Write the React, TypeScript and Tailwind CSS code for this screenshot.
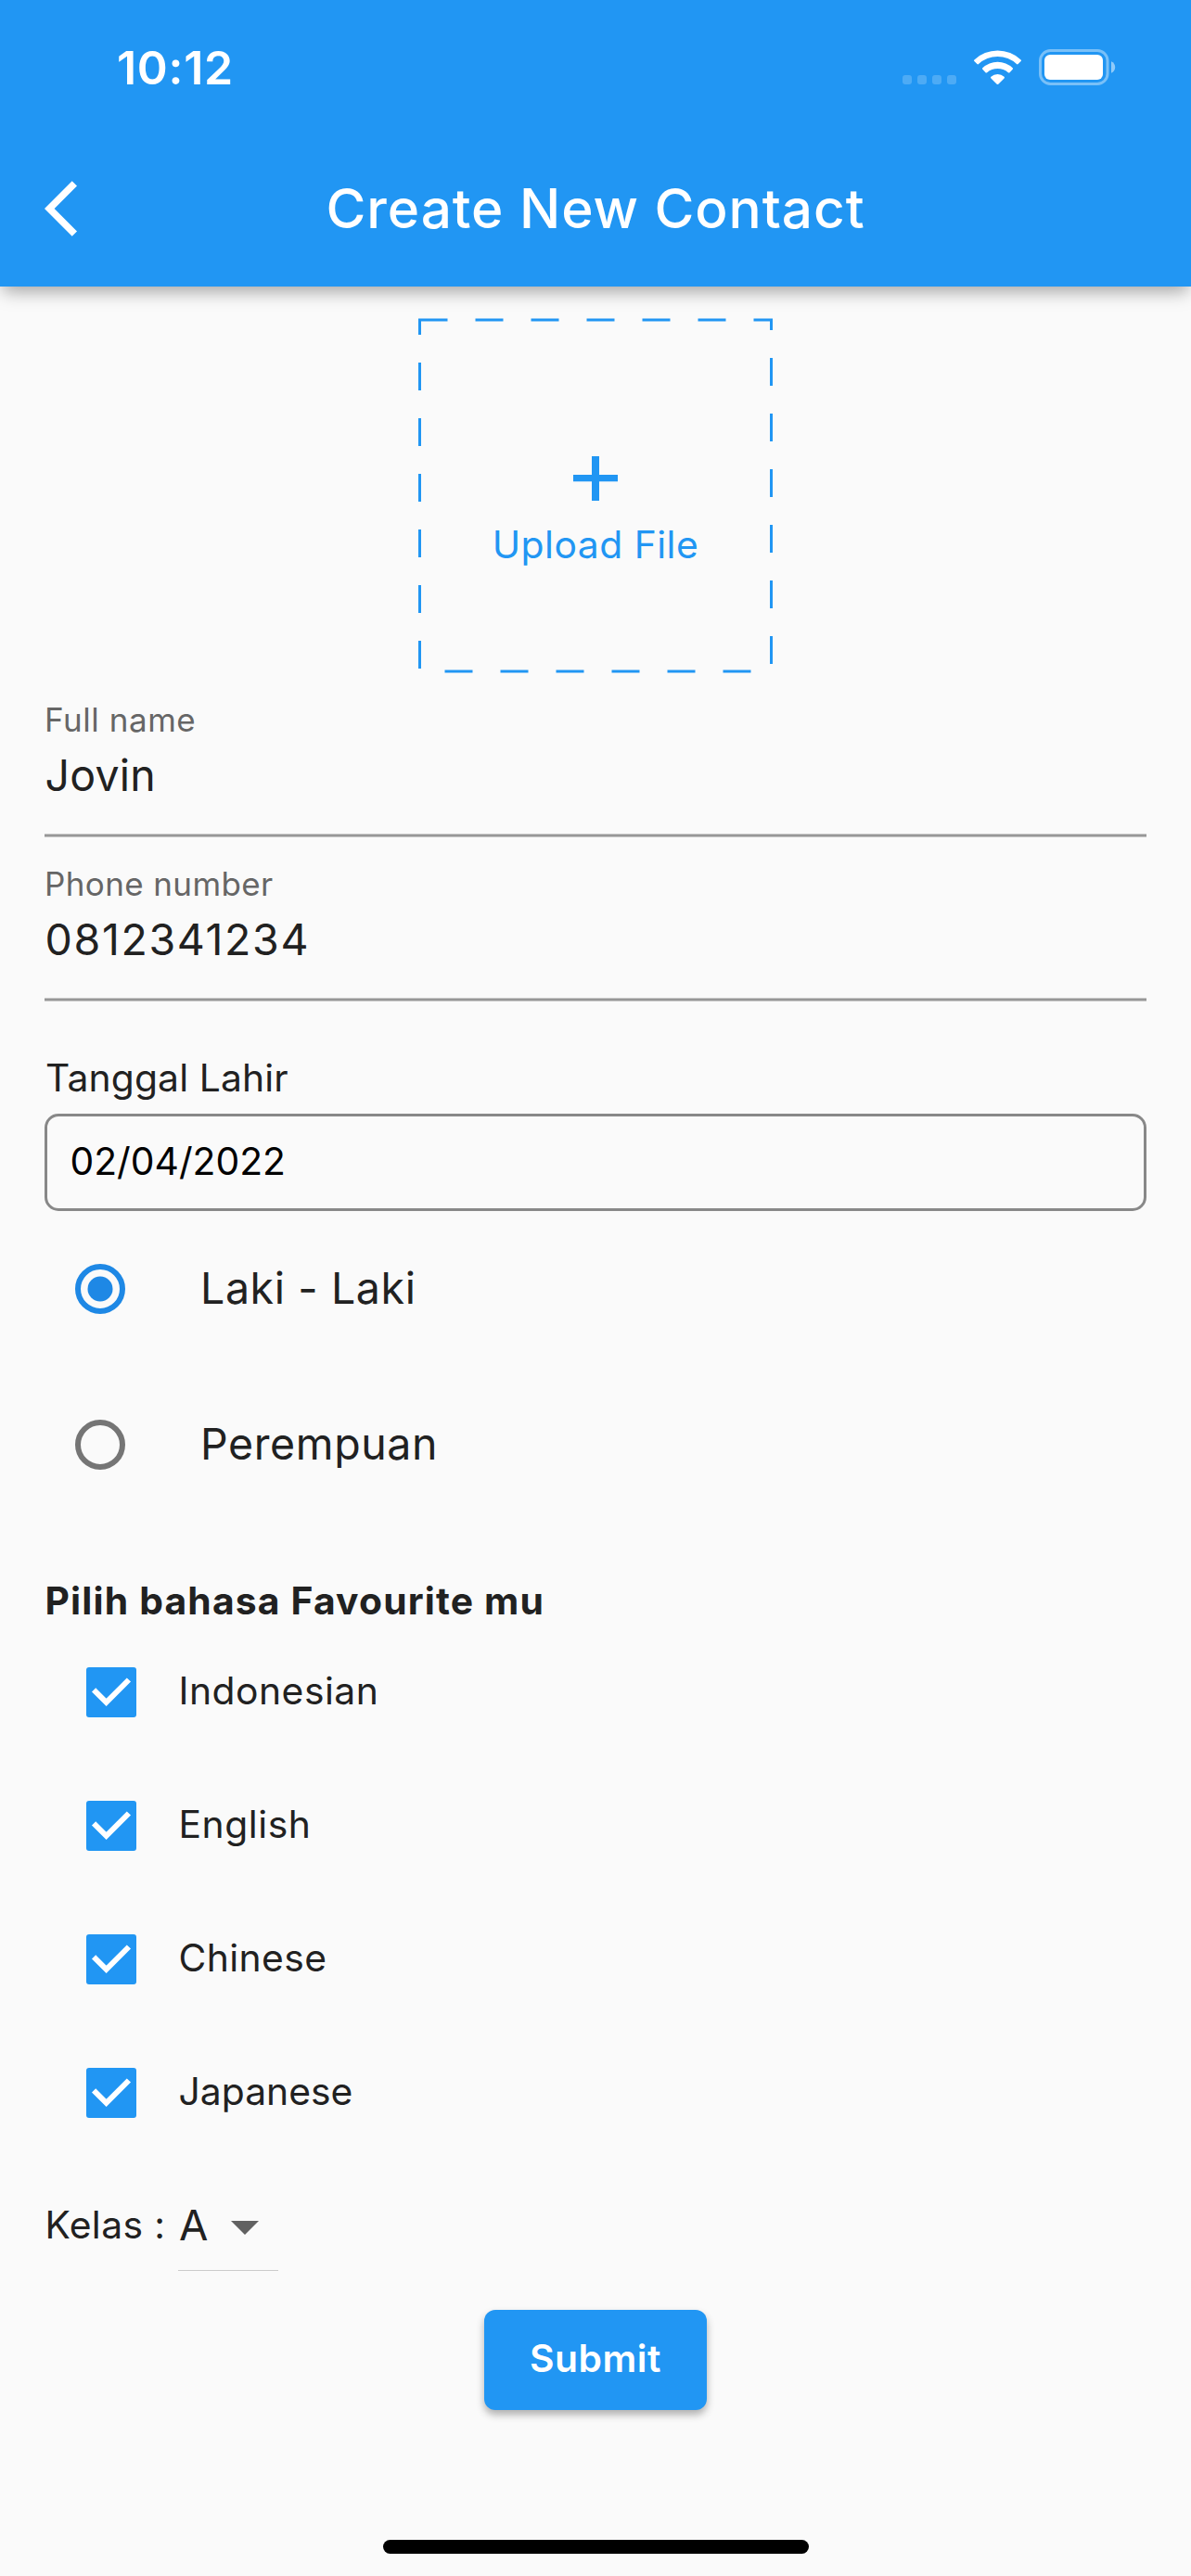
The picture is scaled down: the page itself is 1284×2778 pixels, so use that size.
import React from "react";

const radios = [
  { label: "Laki - Laki", selected: true },
  { label: "Perempuan", selected: false },
];

const languages = [
  { label: "Indonesian", tracking: "tracking-[0.5px]" },
  { label: "English", tracking: "tracking-[0.55px]" },
  { label: "Chinese", tracking: "tracking-[0.41px]" },
  { label: "Japanese", tracking: "tracking-[0.03px]" },
];

function WifiIcon() {
  return (
    <svg width="51" height="38" viewBox="0 0 51 38" fill="#fff">
      <path d="M0.4 10.4A36.5 36.5 0 0 1 50.6 10.4Q51.4 11.2 50.6 12L47.6 15.1Q46.8 15.8 46 15.1A30 30 0 0 0 5 15.1Q4.2 15.8 3.4 15.1L0.4 12Q-0.4 11.2 0.4 10.4Z" />
      <path d="M9.3 19.2A23.5 23.5 0 0 1 41.7 19.2Q42.5 20 41.7 20.8L38.5 24.2Q37.7 25 36.9 24.2A17.6 17.6 0 0 0 14.1 24.2Q13.3 25 12.5 24.2L9.3 20.8Q8.5 20 9.3 19.2Z" />
      <path d="M18.4 28.8A10.6 10.6 0 0 1 32.6 28.8Q33.4 29.6 32.6 30.4L26.3 36.7Q25.5 37.4 24.7 36.7L18.4 30.4Q17.6 29.6 18.4 28.8Z" />
    </svg>
  );
}

function BatteryIcon() {
  return (
    <svg width="83" height="39" viewBox="0 0 83 39">
      <rect x="1.5" y="1.5" width="72.5" height="36" rx="11" fill="none" stroke="#fff" strokeOpacity="0.4" strokeWidth="3" />
      <rect x="6" y="6" width="63" height="27" rx="6" fill="#fff" />
      <path d="M78 13.2C80.6 14.2 82.2 16.6 82.2 19.5S80.6 24.8 78 25.8Z" fill="#fff" fillOpacity="0.5" />
    </svg>
  );
}

function Header() {
  return (
    <header className="relative z-10 flex h-[309px] shrink-0 flex-col bg-[#2196f3] text-white shadow-[0_8px_18px_-3px_rgba(0,0,0,0.36)]">
      <div className="flex h-[141px] items-start justify-between pl-[126px] pr-[81px]">
        <span className="mt-[43px] text-[50px] leading-[60px] font-semibold tracking-[0.72px]">10:12</span>
        <div className="mt-[53px] flex items-start">
          <div className="mt-7 mr-[19px] flex gap-[6px]">
            {[0, 1, 2, 3].map((i) => (
              <span key={i} className="h-[10px] w-[10px] rounded-[3px] bg-white/20" />
            ))}
          </div>
          <div className="mt-px mr-[19px]">
            <WifiIcon />
          </div>
          <BatteryIcon />
        </div>
      </div>
      <div className="grid h-[168px] grid-cols-[303.5px_1fr] items-start pl-12">
        <svg className="mt-[54px]" width="36" height="60" viewBox="0 2 12 20" fill="#fff">
          <path d="M11.67 3.87L9.9 2.1 0 12l9.9 9.9 1.77-1.77L3.54 12z" />
        </svg>
        <h1 className="mt-12 text-[58.5px] leading-[71px] font-medium tracking-[0.94px] whitespace-nowrap">
          Create New Contact
        </h1>
      </div>
    </header>
  );
}

function UploadBox() {
  return (
    <button className="relative mt-[34px] flex h-[383px] w-[382px] flex-col items-center self-center text-[#2196f3]">
      <svg className="absolute inset-0" width="382" height="383" fill="none">
        <rect x="1.5" y="2" width="379" height="379" stroke="#2196f3" strokeWidth="3" strokeDasharray="30 30" />
      </svg>
      <svg className="mt-[149px]" width="48" height="48" fill="#2196f3">
        <path d="M20 0h8v20h20v7.3H28V48h-8V27.3H0V20h20z" />
      </svg>
      <span className="mt-[22px] text-[40.8px] leading-[50px] tracking-[0.5px] whitespace-nowrap">Upload File</span>
    </button>
  );
}

function Field({ label, value, labelClass, valueClass }: { label: string; value: string; labelClass: string; valueClass: string }) {
  return (
    <div className="flex h-[177px] flex-col pt-[29px]">
      <span className={`text-[35px] leading-[42px] text-[#666666] ${labelClass}`}>{label}</span>
      <span className={`mt-[11px] ml-[0.5px] text-[46.5px] leading-[56px] ${valueClass}`}>{value}</span>
      <div className="mt-[35px] h-1 border-y border-[#c6c6c6] bg-[#979797]" />
    </div>
  );
}

export default function App() {
  return (
    <div className="flex h-[2778px] w-[1284px] flex-col overflow-hidden bg-[#fafafa] font-['Inter',sans-serif] text-[#212121]">
      <Header />
      <main className="flex flex-1 flex-col px-12">
        <UploadBox />
        <Field label="Full name" value="Jovin" labelClass="tracking-[0.55px]" valueClass="tracking-[0.2px]" />
        <Field label="Phone number" value="0812341234" labelClass="tracking-[0.38px]" valueClass="tracking-[1.64px]" />

        <label className="mt-[57px] ml-px text-[40.8px] leading-[50px] tracking-[0.14px]">Tanggal Lahir</label>
        <div className="mt-[14px] h-[105px] rounded-[15px] border-3 border-[#888888] pt-[23px] pl-[24.5px] text-[40.8px] leading-[50px] text-black">
          02/04/2022
        </div>

        {radios.map(({ label, selected }) => (
          <div key={label} className="flex h-[168px] items-center pl-[33px]">
            <svg width="54" height="54" fill="none">
              <circle cx="27" cy="27" r="24" strokeWidth="6" className={selected ? "stroke-[#1e88e5]" : "stroke-[#757575]"} />
              {selected && <circle cx="27" cy="27" r="13.5" className="fill-[#1e88e5]" />}
            </svg>
            <span className="ml-[81px] pb-[2px] text-[46.5px] leading-[56px] tracking-[0.6px]">{label}</span>
          </div>
        ))}

        <h2 className="mt-[59px] mb-[2px] ml-[0.5px] text-[40.8px] leading-[50px] font-bold tracking-[1.17px] whitespace-nowrap">
          Pilih bahasa Favourite mu
        </h2>

        {languages.map(({ label, tracking }) => (
          <div key={label} className="flex h-36 items-center pl-[45px]">
            <svg width="54" height="54" fill="none">
              <rect width="54" height="54" rx="3" fill="#2196f3" />
              <path d="M8.1 24.3L21.6 37.8L45.9 13.5" stroke="#fff" strokeWidth="6" />
            </svg>
            <span className={`ml-[45.5px] pb-1 text-[40.8px] leading-[50px] ${tracking}`}>{label}</span>
          </div>
        ))}

        <div className="flex h-[120px] items-start">
          <span className="mt-[45px] w-36 pl-[0.5px] text-[40.8px] leading-[50px] tracking-[0.39px] whitespace-nowrap">Kelas :</span>
          <div className="flex h-full w-[108px] items-start border-b border-[#cccccc]">
            <span className="mt-[43px] w-[57px] pl-px text-[45.5px] leading-[56px]">A</span>
            <svg className="mt-[66px]" width="30" height="15" fill="#616161">
              <path d="M0 0H30L15 15z" />
            </svg>
          </div>
        </div>

        <button className="mt-[42px] h-[108px] w-60 self-center rounded-[12px] bg-[#2196f3] pb-1 text-[40.8px] leading-[50px] font-semibold tracking-[0.52px] text-white shadow-[0_5px_8px_rgba(0,0,0,0.3)]">
          Submit
        </button>

        <div className="mt-auto mb-6 h-[15px] w-[459px] self-center rounded-full bg-black" />
      </main>
    </div>
  );
}
